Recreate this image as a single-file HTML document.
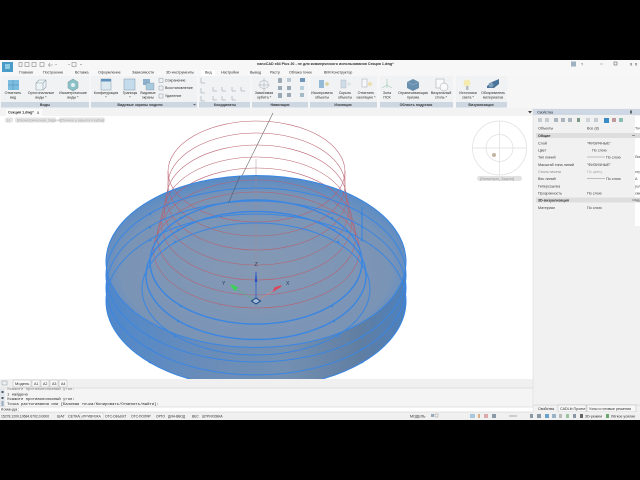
<!DOCTYPE html>
<html><head><meta charset="utf-8"><style>
html,body{margin:0;padding:0;background:#000;width:640px;height:480px;overflow:hidden}
svg{display:block;filter:blur(.3px)}
text{font-family:"Liberation Sans","Noto Sans CJK SC",sans-serif;font-size:3.65px;fill:#2e2e2e}
.m text{text-anchor:middle}
.mono{font-family:"Liberation Mono","DejaVu Sans Mono",monospace;font-size:3.9px;fill:#222}
.lb{font-size:3.6px;fill:#3c3c3c;font-weight:bold}
.p{font-size:3.7px;fill:#3c3c3c}
.b{fill:#3f86d8}
.mi{fill:none;stroke:#8a9aa8;stroke-width:.5}
</style></head><body>
<svg width="640" height="480" viewBox="0 0 640 480" xmlns="http://www.w3.org/2000/svg">
<defs>
<radialGradient id="top" cx=".5" cy=".55" r=".56"><stop offset="0" stop-color="#8599b4"/><stop offset=".8" stop-color="#7a94b6"/><stop offset="1" stop-color="#528aca"/></radialGradient>
<linearGradient id="side"><stop offset="0" stop-color="#4f88cb"/><stop offset=".3" stop-color="#688cba"/><stop offset=".6" stop-color="#7390b2"/><stop offset=".85" stop-color="#607ea2"/><stop offset="1" stop-color="#4c80bd"/></linearGradient>
<clipPath id="vp"><rect x="0" y="110" width="533" height="269"/></clipPath>
</defs>
<rect width="640" height="480" fill="#000"/>
<rect y="60" width="640" height="16" fill="#f7f7f7"/>
<rect y="76" width="640" height="33" fill="#f6f6f6"/>
<!-- title bar -->
<rect x="2" y="62" width="11" height="10" fill="#4a9cc8"/><rect x="5" y="64" width="5" height="5" fill="#8ccbe2"/>
<g fill="none" stroke="#888" stroke-width=".6">
<rect x="19" y="62.500" width="3" height="4"/><rect x="25" y="62.500" width="4" height="4"/><rect x="32" y="62.500" width="4" height="4"/><rect x="40" y="62.500" width="4" height="4"/><path d="M49 65h4M50 63l-1.500 2 1.500 2"/><path d="M55 64.500h2M68 64.500h2"/><rect x="72" y="62.500" width="4" height="4"/><path d="M80 64.500h2"/>
</g>
<text x="257" y="65" style="font-size:3.65px;font-weight:bold;fill:#333">nanoCAD x64 Plus 20 - не для коммерческого использования Секция 1.dwg*</text>
<rect x="571" y="61.500" width="5" height="5" fill="#9fb2c2"/><text x="581" y="65.500">?</text><path d="M600 64h3" stroke="#888" stroke-width=".5"/><rect x="614" y="62" width="3" height="3" fill="none" stroke="#666" stroke-width=".6"/><text x="630" y="65.500" style="font-size:4.500px">x</text><text x="635" y="65.500" style="font-size:4.500px">x</text>
<!-- tabs -->
<g>
<text x="19" y="73.500">Главная</text><text x="43" y="73.500">Построение</text><text x="75" y="73.500">Вставка</text><text x="98" y="73.500">Оформление</text><text x="132" y="73.500">Зависимости</text><text x="166" y="73.500">3D-инструменты</text>
<rect x="201" y="70" width="14" height="6" fill="#fff"/>
<text x="205" y="73.500">Вид</text><text x="221" y="73.500">Настройки</text><text x="250" y="73.500">Вывод</text><text x="270" y="73.500">Растр</text><text x="289" y="73.500">Облака точек</text><text x="324" y="73.500">BIM Конструктор</text>
</g>
<!-- ribbon panels -->
<g fill="#f1f2f3">
<rect x="1" y="76" width="88" height="31"/><rect x="91" y="76" width="106" height="31"/><rect x="199" y="76" width="51" height="31"/><rect x="252" y="76" width="56" height="31"/><rect x="310" y="76" width="67" height="31"/><rect x="380" y="76" width="73" height="31"/><rect x="456" y="76" width="51" height="31"/>
</g>
<g fill="#ccd7e2">
<rect x="1" y="102" width="88" height="5.500"/><rect x="91" y="102" width="106" height="5.500"/><rect x="199" y="102" width="51" height="5.500"/><rect x="252" y="102" width="56" height="5.500"/><rect x="310" y="102" width="67" height="5.500"/><rect x="380" y="102" width="73" height="5.500"/><rect x="456" y="102" width="51" height="5.500"/>
</g>
<g class="m">
<text x="45" y="106" class="lb">Виды</text><text x="140" y="106" class="lb">Видовые экраны модели</text><text x="225" y="106" class="lb">Координаты</text><text x="280" y="106" class="lb">Навигация</text><text x="343" y="106" class="lb">Изоляция</text><text x="416" y="106" class="lb">Область подрезки</text><text x="481" y="106" class="lb">Визуализация</text>
<text x="13" y="94">Отменить</text><text x="13" y="98.500">вид</text>
<text x="41" y="94">Ортогональные</text><text x="41" y="98.500">виды *</text>
<text x="73" y="94">Изометрические</text><text x="73" y="98.500">виды *</text>
<text x="106" y="94">Конфигурация</text><text x="106" y="98.500">*</text>
<text x="130" y="94">Границы</text><text x="130" y="98.500">*</text>
<text x="148" y="94">Видовые</text><text x="148" y="98.500">экраны</text>
<text x="264" y="94">Зависимая</text><text x="264" y="98.500">орбита *</text>
<text x="322" y="94">Изолировать</text><text x="322" y="98.500">объекты</text>
<text x="345" y="94">Скрыть</text><text x="345" y="98.500">объекты</text>
<text x="366" y="94">Отменить</text><text x="366" y="98.500">изоляцию *</text>
<text x="387" y="94">Зона</text><text x="387" y="98.500">ПСК</text>
<text x="413" y="94">Ограничивающая</text><text x="413" y="98.500">призма</text>
<text x="441" y="94">Визуальный</text><text x="441" y="98.500">стиль *</text>
<text x="468" y="94">Источники</text><text x="468" y="98.500">света *</text>
<text x="493" y="94">Обозреватель</text><text x="493" y="98.500">материалов</text>
</g>
<!-- big icons -->
<rect x="8" y="80" width="11" height="10" fill="#7cbce0"/><path d="M13 80v10M8 85h11" stroke="#4f8fb8" stroke-width=".5"/>
<path d="M36 83l3-3h7v7l-3 3h-7zM36 83h7v7M43 83l3-3" fill="#eef3f6" stroke="#8fa3af" stroke-width=".6"/>
<path d="M73 79l5 3v6l-5 3-5-3v-6z" fill="#8ac2c8" stroke="#7a9aa0" stroke-width=".5"/><circle cx="73" cy="85" r="2" fill="#e4f1f3"/>
<rect x="101" y="79" width="10" height="11" fill="#dde9f1" stroke="#7f9aad" stroke-width=".5"/><rect x="101" y="79" width="10" height="2.500" fill="#5f92bc"/>
<rect x="124" y="79" width="11" height="11" fill="#c4dbeb" stroke="#7f9aad" stroke-width=".5"/>
<rect x="143" y="79" width="7" height="6" fill="#8cb0cd"/><rect x="146" y="83" width="8" height="7" fill="#a8cade" stroke="#778" stroke-width=".3"/>
<g fill="none" stroke="#909ca6" stroke-width=".5"><rect x="159" y="78.500" width="4" height="4"/><rect x="159" y="86" width="4" height="4"/><rect x="159" y="94" width="4" height="4"/></g>
<text x="165" y="81.500">Сохранение</text><text x="165" y="89">Восстановление</text><text x="165" y="97">Удаление</text>
<path d="M193 104l1.500 1.500 1.500-1.500z" fill="#666"/>
<!-- coordinates icons -->
<g class="mi" fill="none">
<path d="M201 78v5h4M201 88v5h4M201 96v5h4M213 87v4h4M222 87v4h4M232 87v4h4M241 87v4h4M213 96v4h4M222 96v4h4M232 96v4h4"/>
</g>
<!-- navigation icons -->
<path d="M264 78v14M258 85h12M260 82l4-2 4 2v5l-4 2-4-2z" fill="none" stroke="#a0acb6" stroke-width=".5"/>
<g fill="#9aa9b4"><rect x="278" y="78" width="4" height="5" rx="1"/><rect x="278" y="86" width="4" height="4"/><rect x="278" y="93" width="4" height="5"/><rect x="287" y="78" width="4" height="4" fill="#bcc9d2"/><rect x="287" y="86" width="4" height="4"/><rect x="287" y="93" width="4" height="4"/><rect x="300" y="78" width="5" height="4" fill="#6f98bb"/><rect x="300" y="86" width="4" height="4" fill="#b8cfdc"/><rect x="300" y="93" width="4" height="4" fill="#a4bac6"/></g>
<!-- isolation icons -->
<rect x="319" y="80" width="5" height="8" fill="#94bad6"/><circle cx="327" cy="84" r="1.800" fill="#dcd09a"/>
<rect x="341" y="80" width="5" height="8" fill="#cfdde7" stroke="#99a" stroke-width=".3"/><circle cx="349" cy="84" r="1.800" fill="#dde4e9"/>
<rect x="362" y="79" width="5" height="8" fill="#f7f7f7" stroke="#8a98a2" stroke-width=".4"/><circle cx="370" cy="84" r="2" fill="#eddfae"/>
<!-- clip icons -->
<path d="M387 79v9M387 85l5 3M387 85l-5 3" stroke="#8fc0a8" stroke-width=".5" fill="none"/>
<path d="M407 82l6-3 6 3v6l-6 3-6-3z" fill="#6a90b0"/><path d="M407 82l6 3 6-3" stroke="#9ab8ce" stroke-width=".5" fill="none"/>
<rect x="436" y="79" width="8" height="9" fill="#fafafa" stroke="#98a2aa" stroke-width=".5"/><circle cx="444" cy="87" r="4" fill="#fafafa" stroke="#98a2aa" stroke-width=".5"/>
<!-- visualization icons -->
<circle cx="467" cy="83" r="3.500" fill="#f5eab0"/><rect x="466" y="86" width="2.500" height="4" fill="#b4bec6"/>
<path d="M487 86l5-4 7-3v5l-5 4-7 0z" fill="#4a7499"/><circle cx="491" cy="85" r="2.500" fill="#7c9fbc"/>
<!-- viewport -->
<rect x="0" y="108" width="533" height="272" fill="#fff"/>
<rect x="0" y="108" width="533" height="8" fill="#f3f3f3"/>
<rect x="6" y="109" width="36" height="7" fill="#fbfbfb"/>
<text x="8" y="113.500" style="font-weight:bold">Секция 1.dwg*</text><text x="37" y="113.800" style="font-size:4.500px">x</text>
<path d="M528 111h4l-2 2.500z" fill="#444"/>
<g fill="#e4e4e4"><rect x="5" y="117.500" width="8" height="5" rx="1.500"/><rect x="15" y="117.500" width="41" height="5" rx="1.500"/><rect x="59" y="117.500" width="46" height="5" rx="1.500"/></g>
<text x="7" y="121.300" style="fill:#aaa">[-]</text><text x="17" y="121.300" style="fill:#aaa">[Изометрическая_Задняя]</text><text x="61" y="121.300" style="fill:#aaa">[Точное у скрытого кубов]</text>
<g clip-path="url(#vp)">
<path d="M273 113L228.500 203" stroke="#666" stroke-width=".6" fill="none"/>
<!-- red behind disc top -->
<g fill="none" stroke="#c9707a" stroke-width=".55">
<path d="M168 171V190M345 171V190"/>
</g>
<!-- disc -->
<path d="M106 262V301A150 87 0 0 0 406 301V262Z" fill="url(#side)"/>
<ellipse cx="256" cy="261.500" rx="150" ry="86" fill="url(#top)"/>
<!-- red rings -->
<g fill="none" stroke="#b8606f" stroke-width=".55">
<ellipse cx="256.500" cy="171.500" rx="88.500" ry="50.500"/>
<ellipse cx="256.500" cy="184.500" rx="88.500" ry="51.500"/>
<ellipse cx="256.500" cy="197.500" rx="90" ry="52.500"/>
<ellipse cx="256.500" cy="211" rx="92" ry="54"/>
<ellipse cx="256.500" cy="224" rx="95" ry="56"/>
<ellipse cx="256.500" cy="237.500" rx="99" ry="57.500"/>
<ellipse cx="256.500" cy="250" rx="103" ry="58"/>
<path d="M168 190L153 250M345 190L360 250"/>
</g>
<path d="M256 159V290" stroke="#a58a96" stroke-width=".45"/>
<path d="M236 205l4 0" stroke="#b08a60" stroke-width=".5"/>
<!-- blue rings -->
<g fill="none" stroke="#3a86e2">
<ellipse cx="256" cy="275" rx="150" ry="87" stroke-width="1"/>
<ellipse cx="256" cy="288" rx="150" ry="87" stroke-width="1"/>
<ellipse cx="256" cy="301" rx="150" ry="87" stroke-width="1"/>
<ellipse cx="256" cy="262" rx="106" ry="62" stroke-width="1.400"/>
<ellipse cx="256" cy="275.500" rx="110" ry="64" stroke-width="1.400"/>
<ellipse cx="256" cy="289" rx="114" ry="66" stroke-width="1"/>
<path d="M362 207V240" stroke-width="1.100"/>
<ellipse cx="256" cy="261.500" rx="150" ry="86" stroke-width="1"/>
</g>
<g class="b">
<circle cx="150" cy="214" r="1.300"/><circle cx="150" cy="227" r="1.300"/><circle cx="150" cy="240" r="1.300"/>
<circle cx="362" cy="214" r="1.300"/><circle cx="362" cy="227" r="1.300"/><circle cx="362" cy="240" r="1.300"/>
<circle cx="181" cy="218" r="1.300"/><circle cx="178" cy="230" r="1.300"/><circle cx="175" cy="242" r="1.300"/>
<circle cx="332" cy="218" r="1.300"/><circle cx="334" cy="230" r="1.300"/><circle cx="338" cy="242" r="1.300"/>
<circle cx="181" cy="306" r="1.300"/><circle cx="178" cy="321" r="1.300"/><circle cx="175" cy="336" r="1.300"/>
<circle cx="332" cy="306" r="1.300"/><circle cx="334" cy="321" r="1.300"/><circle cx="338" cy="336" r="1.300"/>
<circle cx="150" cy="337" r="1.300"/><circle cx="150" cy="349" r="1.300"/><circle cx="150" cy="362" r="1.300"/>
<circle cx="362" cy="337" r="1.300"/><circle cx="362" cy="349" r="1.300"/><circle cx="362" cy="362" r="1.300"/>
</g>
<path d="M228.500 203L240 176" stroke="#4c5c70" stroke-width=".6"/>
<!-- UCS -->
<path d="M256 301V272" stroke="#2f5fd0" stroke-width=".8"/>
<path d="M254.800 282L256 271l1.200 11z" fill="#2050c8"/>
<path d="M256 301L234 288" stroke="#5ab080" stroke-width=".7"/>
<path d="M231 285l6 2.500-2 2.500z" fill="#3ed05a" stroke="#3ed05a" stroke-width="1.500"/>
<path d="M256 301L278 288" stroke="#d88a80" stroke-width=".7"/>
<path d="M281 286l-6 2-1 2.500z" fill="#d8485a" stroke="#d8485a" stroke-width="1.500"/>
<path d="M256 298l4.500 3-4.500 3-4.500-3z" fill="#9fbbd8" stroke="#123a7a" stroke-width=".9"/>
<text x="254.500" y="266" style="font-size:5.500px;fill:#2a4060">Z</text>
<text x="222" y="285" style="font-size:5px;fill:#2a4060">Y</text>
<text x="286" y="285" style="font-size:5px;fill:#2a4060">X</text>
</g>
<!-- compass -->
<g fill="none" stroke="#dedede" stroke-width=".7">
<circle cx="499.500" cy="148" r="27"/><circle cx="499.500" cy="148" r="13.500"/><path d="M472.500 148h54M499.500 121v54"/>
</g>
<circle cx="494" cy="155" r="2" fill="#c4b4a2"/>
<rect x="477" y="176" width="45" height="5" rx="2.500" fill="#e2e2e2"/>
<text x="480" y="179.800" style="font-size:3.600px;fill:#999">[Изометрия_Задняя]</text>
<!-- lower tabs -->
<rect x="0" y="379" width="533" height="41" fill="#f0f0f0"/>
<rect x="2" y="381" width="5" height="4" fill="none" stroke="#8a98a4" stroke-width=".5"/>
<g fill="#f8f8f8" stroke="#aaa" stroke-width=".4"><rect x="13" y="380" width="18" height="7"/><rect x="32" y="380" width="8" height="7"/><rect x="41" y="380" width="8" height="7"/><rect x="50" y="380" width="8" height="7"/><rect x="59" y="380" width="8" height="7"/></g>
<text x="15" y="385" style="font-size:4px">Модель</text><text x="34" y="385">А1</text><text x="43" y="385">А2</text><text x="52" y="385">А3</text><text x="61" y="385">А4</text>
<!-- command -->
<rect x="0" y="388" width="533" height="19" fill="#f4f4f4"/>
<path d="M0 388h533" stroke="#ccc" stroke-width=".5"/>
<rect x="0" y="389" width="5" height="18" fill="#e2e6ea"/>
<rect x="1.500" y="391" width="2" height="2" fill="#456"/><rect x="1.500" y="397" width="2" height="2" fill="#456"/><rect x="1.500" y="401" width="2" height="5" fill="#9aa8bc"/>
<text class="mono" x="7" y="390.200" style="fill:#777">Укажите противоположный угол:</text>
<text class="mono" x="7" y="395.500">1 найдено</text>
<text class="mono" x="7" y="400.200">Укажите противоположный угол:</text>
<text class="mono" x="7" y="405">Точка растягивания или [Базовая точка/Копировать/Отменить/выйти]:</text>
<rect x="0" y="407" width="533" height="5" fill="#fff"/><path d="M0 407h533" stroke="#c0c0c0" stroke-width=".4"/>
<text class="mono" x="1" y="410.500">Команда:</text>
<!-- right panel -->
<rect x="533" y="108" width="107" height="304" fill="#f1f1f1"/>
<rect x="533" y="109" width="107" height="6" fill="#cdd8e4"/>
<path d="M533 108v304" stroke="#d8d8d8" stroke-width=".5"/>
<text x="537" y="113.300">Свойства</text><rect x="630" y="110.500" width="2" height="3" fill="#666"/>
<g fill="#aab5be"><rect x="538" y="118" width="4" height="4" opacity=".6"/><rect x="545" y="118" width="4" height="4" opacity=".6"/><rect x="554" y="118" width="4" height="4"/><rect x="561" y="118" width="4" height="4"/><rect x="568" y="118" width="4" height="4"/><rect x="577" y="118" width="3" height="4" fill="#7a9c86"/><rect x="586" y="118" width="4" height="4" opacity=".5"/><rect x="594" y="118" width="4" height="4" opacity=".6"/><rect x="604" y="118" width="5" height="5" fill="#3a8cc6"/><rect x="612" y="118" width="4" height="4" fill="#c09a9a"/><rect x="619" y="118" width="4" height="4" fill="#8abcb4"/></g>
<rect x="635" y="116" width="5" height="110" fill="#fff"/>
<rect x="634" y="133" width="6" height="5" fill="#dadada"/>
<rect x="536" y="133" width="98" height="5" fill="#dedede"/><rect x="536" y="197.500" width="98" height="5" fill="#dedede"/>
<rect x="634" y="197.500" width="6" height="5" fill="#dadada"/>
<text class="p" x="538" y="129.500">Объекты</text><text class="p" x="587" y="129.500">Все (8)</text>
<text x="538" y="137" style="font-weight:bold;fill:#333">Общие</text><path d="M632 135.500h3" stroke="#444" stroke-width=".5"/>
<text class="p" x="538" y="144.500">Слой</text><text class="p" x="587" y="144.500">"ФИЗИЧНЫЕ"</text>
<text class="p" x="538" y="151.500">Цвет</text><text class="p" x="592" y="151.500">По слою</text>
<text class="p" x="538" y="158.500">Тип линий</text><text class="p" x="606" y="158.500">По слою</text><path d="M587 157h18" stroke="#888" stroke-width=".5"/>
<text class="p" x="538" y="166">Масштаб типа линий</text><text class="p" x="587" y="166">"ФИЗИЧНЫЕ"</text>
<text class="p" x="538" y="173" style="fill:#888">Стиль печати</text><text class="p" x="587" y="173" style="fill:#aaa">По цвету</text>
<text class="p" x="538" y="180">Вес линий</text><text class="p" x="606" y="180">По слою</text><path d="M587 178.500h18" stroke="#888" stroke-width=".5"/>
<text class="p" x="538" y="187.500">Гиперссылка</text>
<text class="p" x="538" y="194.500">Прозрачность</text><text class="p" x="587" y="194.500">По слою</text>
<text x="538" y="201.500" style="font-weight:bold;fill:#333">3D-визуализация</text><path d="M632 200h3" stroke="#444" stroke-width=".5"/>
<text class="p" x="538" y="209">Материал</text><text class="p" x="587" y="209">По слою</text>
<text class="p" x="635" y="129.500">Точ</text><text class="p" x="635" y="158">Лин</text><text class="p" x="635" y="173">стр</text><text class="p" x="635" y="180">А</text><text class="p" x="635" y="187.500">узл</text><text class="p" x="635" y="194.500">сме</text><text class="p" x="635" y="201.500">Ча</text>
<!-- panel tabs -->
<path d="M533 405h107" stroke="#c8c8c8" stroke-width=".5"/>
<rect x="558" y="405" width="28" height="7" fill="#f8f8f8" stroke="#aaa" stroke-width=".4"/><rect x="587" y="405" width="49" height="7" fill="#f8f8f8" stroke="#aaa" stroke-width=".4"/>
<text x="538" y="410">Свойства</text><text x="560" y="410">CADLib Проект</text><text x="589" y="410">Узлы и готовые решения</text>
<!-- status -->
<rect x="0" y="412" width="640" height="8" fill="#f0f0f0"/>
<path d="M0 412h533" stroke="#c0c0c0" stroke-width=".4"/>
<text x="1" y="417.500" style="font-size:3.400px">15278.1200,10684.6702,0.0000</text>
<text x="57" y="417.500">ШАГ</text><text x="68" y="417.500">СЕТКА</text>
<rect x="80" y="413" width="23" height="6" fill="#fafafa" stroke="#aaa" stroke-width=".3"/><text x="81" y="417.500" style="font-size:3.400px">оПРИВЯЗКА</text>
<text x="105" y="417.500" style="font-size:3.300px">ОТС-ОБЪЕКТ</text><text x="131" y="417.500" style="font-size:3.300px">ОТС-ПОЛЯР</text><text x="156" y="417.500" style="font-size:3.300px">ОРТО</text><text x="168" y="417.500" style="font-size:3.300px">ДИН-ВВОД</text><text x="192" y="417.500" style="font-size:3.300px">ВЕС</text><text x="202" y="417.500" style="font-size:3.300px">ШТРИХОВКА</text>
<text x="410" y="417.500">МОДЕЛЬ</text><rect x="431" y="414" width="3" height="3" fill="#9ab"/><rect x="435" y="414" width="3" height="3" fill="none" stroke="#888" stroke-width=".4"/>
<rect x="470" y="414" width="5" height="4" fill="#a8c8dc"/><rect x="478" y="414" width="2" height="4" fill="#d8b080"/><rect x="484" y="414" width="4" height="4" fill="#dcaaaa"/><rect x="492" y="414" width="4" height="4" fill="#8a9aa8"/>
<path d="M509 416h8" stroke="#778" stroke-width=".6"/>
<g fill="#8a98a4"><rect x="530" y="414" width="3" height="4"/><rect x="537" y="414" width="4" height="4"/><rect x="545" y="414" width="4" height="4" fill="#6aa2cc"/><rect x="552" y="414" width="4" height="4" fill="#98b4c8"/><rect x="559" y="414" width="3" height="4" fill="#bbb"/><rect x="566" y="414" width="3" height="4" fill="#98c49e"/><rect x="573" y="414" width="3" height="4"/><rect x="580" y="414" width="3" height="4" fill="#666"/></g>
<text x="585" y="417.500">3D-режим</text><rect x="606" y="414" width="3" height="4" fill="#6aa870"/><text x="611" y="417.500">Лёгкое усилие</text>
</svg>
</body></html>
